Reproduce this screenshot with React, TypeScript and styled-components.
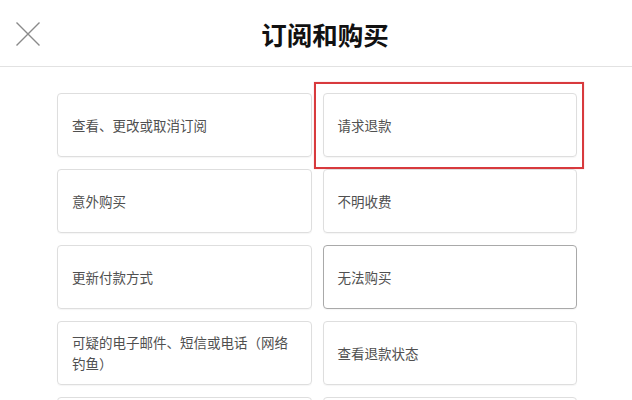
import styled, { createGlobalStyle } from "styled-components";

const GlobalStyle = createGlobalStyle`
    html, body {
        margin: 0;
        padding: 0;
        background: #fff;
        font-family: "Noto Sans CJK SC", "Noto Sans", sans-serif;
    }
`;

const Page = styled.div`
    width: 632px;
    height: 400px;
    overflow: hidden;
`;

const Header = styled.header`
    display: flex;
    align-items: center;
    height: 67px;
    padding: 0 16px;
    border-bottom: 1px solid #e2e2e2;
    box-sizing: border-box;
`;

const CloseButton = styled.button`
    display: flex;
    width: 24px;
    height: 24px;
    padding: 0;
    margin-top: 1px;
    border: none;
    background: none;
    color: #8a8a8a;
    cursor: pointer;
`;

const Title = styled.h1`
    flex: 1;
    margin: 0;
    text-align: center;
    font-size: 25.5px;
    font-weight: 700;
    color: #111;
`;

const Spacer = styled.div`
    width: 6px;
`;

const Grid = styled.ul`
    display: grid;
    grid-template-columns: 1fr 1fr;
    column-gap: 11px;
    row-gap: 12px;
    width: 520px;
    margin: 26px 0 0 57px;
    padding: 0;
    list-style: none;
`;

const Card = styled.li<{ $active?: boolean }>`
    position: relative;
    display: flex;
    align-items: center;
    height: 64px;
    padding: 0 18px 0 14px;
    box-sizing: border-box;
    border: 1px solid ${(p) => (p.$active ? "#a9a9a9" : "#dedede")};
    border-radius: 4px;
    box-shadow: 0 1px 1px rgba(0, 0, 0, 0.04);
    font-size: 13.5px;
    line-height: 21px;
    color: #505050;
`;

const Highlight = styled.span`
    position: absolute;
    left: -10px;
    right: -8px;
    top: -12px;
    bottom: -13px;
    border: 2px solid #d83a3d;
    box-shadow: 0 0 1px rgba(216, 58, 61, 0.4);
    pointer-events: none;
`;

const items = [
    { label: "查看、更改或取消订阅" },
    { label: "请求退款", highlight: true },
    { label: "意外购买" },
    { label: "不明收费" },
    { label: "更新付款方式" },
    { label: "无法购买", active: true },
    { label: "可疑的电子邮件、短信或电话（网络钓鱼）" },
    { label: "查看退款状态" },
    { label: "" },
    { label: "" },
];

function App() {
    return (
        <Page>
            <GlobalStyle />
            <Header>
                <CloseButton aria-label="关闭">
                    <svg width="24" height="24" viewBox="0 0 24 24" fill="none">
                        <path d="M0.5 0.5 L23.5 23.5 M23.5 0.5 L0.5 23.5" stroke="currentColor" strokeWidth="1.4" />
                    </svg>
                </CloseButton>
                <Title>订阅和购买</Title>
                <Spacer />
            </Header>
            <Grid>
                {items.map((item, i) => (
                    <Card key={i} $active={item.active}>
                        {item.label}
                        {item.highlight && <Highlight />}
                    </Card>
                ))}
            </Grid>
        </Page>
    );
}

export default App;
